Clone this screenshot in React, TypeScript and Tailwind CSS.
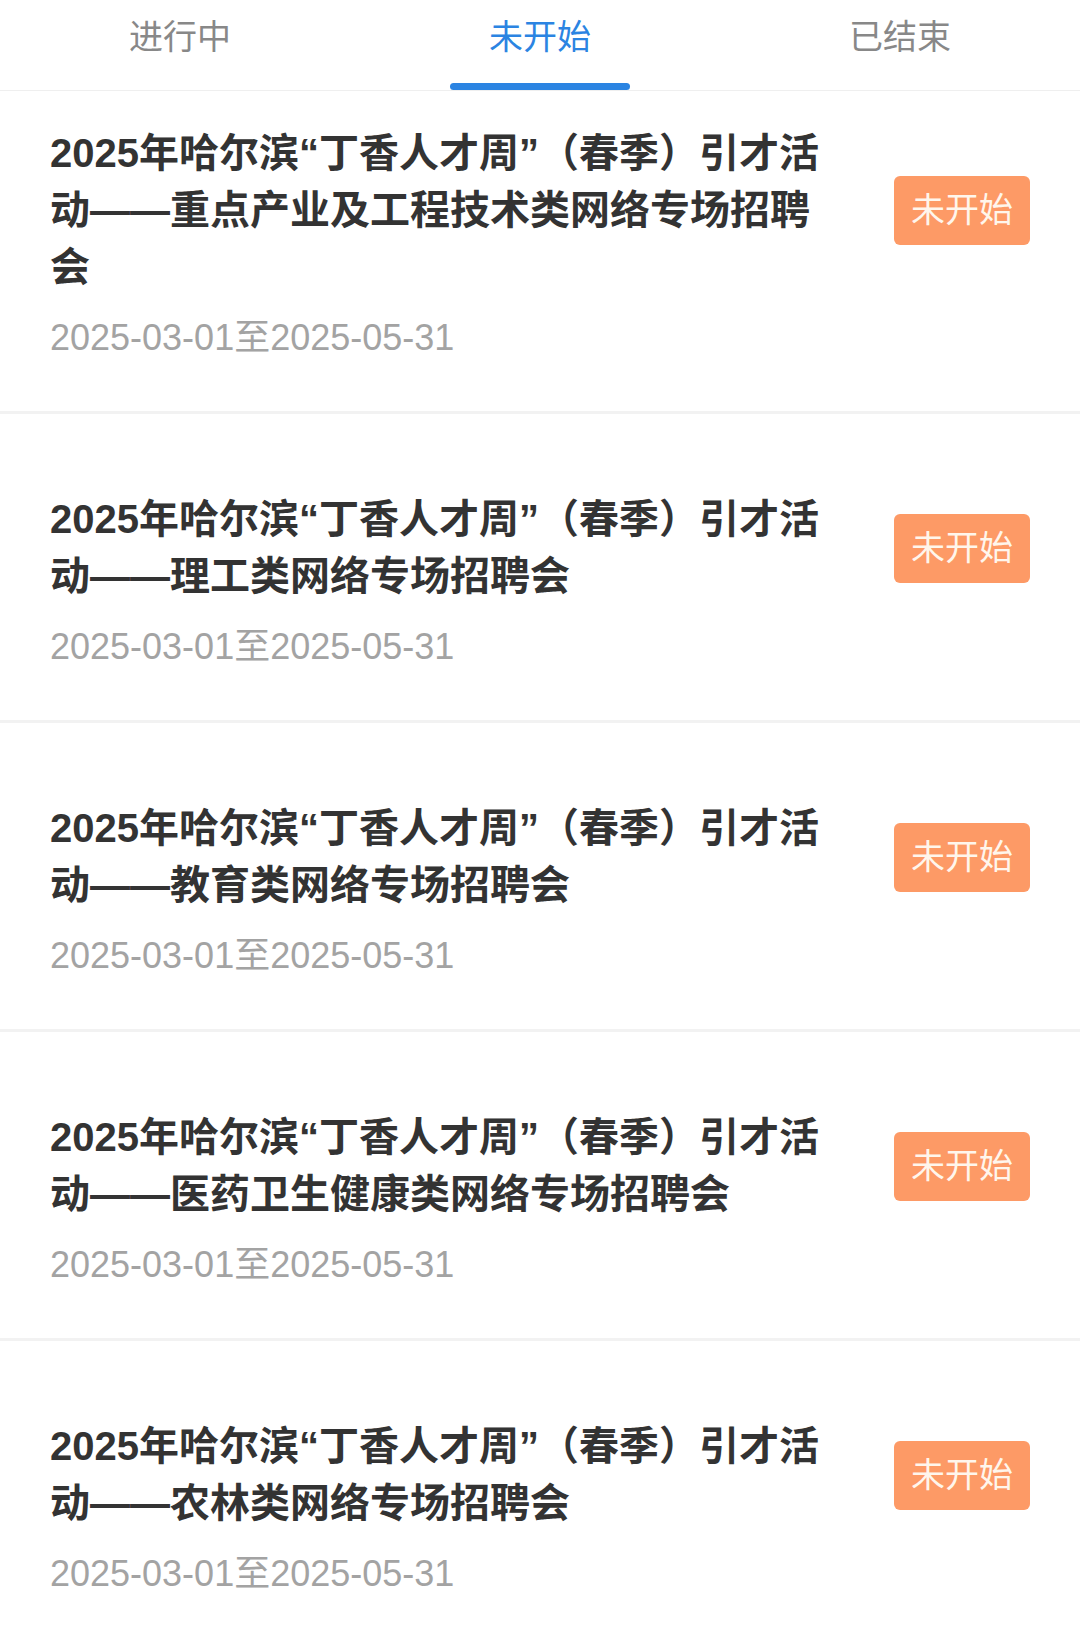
const tabs = ["进行中", "未开始", "已结束"];

const fairs = [
  "2025年哈尔滨“丁香人才周”（春季）引才活动——重点产业及工程技术类网络专场招聘会",
  "2025年哈尔滨“丁香人才周”（春季）引才活动——理工类网络专场招聘会",
  "2025年哈尔滨“丁香人才周”（春季）引才活动——教育类网络专场招聘会",
  "2025年哈尔滨“丁香人才周”（春季）引才活动——医药卫生健康类网络专场招聘会",
  "2025年哈尔滨“丁香人才周”（春季）引才活动——农林类网络专场招聘会",
];

const font = { fontFamily: '"Liberation Sans", "Noto Sans CJK SC", sans-serif' };

export default function App() {
  const active = 1;

  return (
    <div
      className="w-[1080px] h-[1640px] overflow-hidden bg-white [text-spacing-trim:space-all]"
      style={font}
    >
      {/* Tabs */}
      <div className="grid grid-cols-3 h-[91px] border-b border-[#efefef]">
        {tabs.map((tab, i) => (
          <div key={tab} className="relative flex justify-center">
            <span
              className={`mt-[15px] text-[34px] leading-[44px] ${
                i === active ? "text-[#2b84e2]" : "text-[#888888]"
              }`}
            >
              {tab}
            </span>
            {i === active && (
              <div className="absolute left-[90px] top-[83px] w-[180px] h-[7px] rounded-full bg-[#2b84e2]" />
            )}
          </div>
        ))}
      </div>

      {/* List */}
      <div>
        {fairs.map((title, i) => (
          <div
            key={i}
            className={`px-[50px] pb-[49px] border-b-[3px] border-[#f2f2f2] ${
              i === 0 ? "pt-[34px]" : "pt-[77px]"
            }`}
          >
            <div className="flex items-center justify-between">
              <div className="w-[790px] text-[40px] leading-[57px] font-bold text-[#333333]">
                {title}
              </div>
              <div className="w-[136px] h-[69px] rounded-[6px] bg-[#fd9a66] flex items-center justify-center text-[34px] text-[#fff6ec]">
                未开始
              </div>
            </div>
            <div className="mt-[18px] text-[36px] leading-[48px] text-[#a3a3a3]">
              2025-03-01至2025-05-31
            </div>
          </div>
        ))}
      </div>
    </div>
  );
}
